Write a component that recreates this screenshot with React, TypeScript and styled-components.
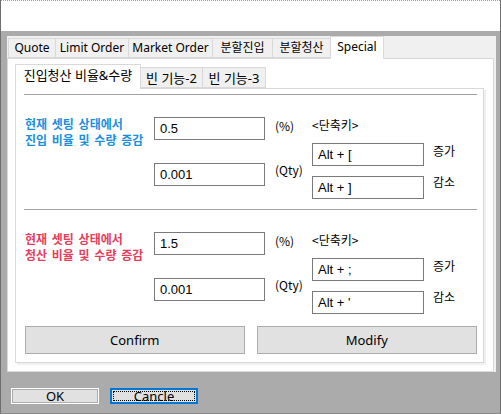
import React from "react";
import styled, { createGlobalStyle } from "styled-components";

const GlobalStyle = createGlobalStyle`
  html, body {
    margin: 0;
    padding: 0;
    background: #ffffff;
  }
  * {
    box-sizing: border-box;
  }
`;

const UI_FONT = `"Noto Sans", "Noto Sans CJK KR", sans-serif`;
const KR_FONT = `"Noto Sans CJK KR", "Noto Sans", sans-serif`;

const Window = styled.div`
  width: 501px;
  height: 414px;
  display: flex;
  flex-direction: column;
  border-left: 1px solid #6e6e6e;
  border-right: 1px solid #6e6e6e;
  border-bottom: 1px solid #8a8a8a;
  font-family: ${UI_FONT};
  color: #000;
  overflow: hidden;
`;

const TopBand = styled.div`
  height: 31px;
  flex: none;
  background: #ffffff;
  border-top: 1px dotted #9a9a9a;
`;

const Client = styled.div`
  flex: 1;
  background: #ababab;
  padding: 5px 4px 0 6px;
  display: flex;
  flex-direction: column;
`;

const TabControl = styled.div`
  width: 489px;
  height: 336px;
  background: #f0f0f0;
  display: flex;
  flex-direction: column;
  padding: 0 2px 1px 0;
`;

const TabStrip = styled.div<{ $h: number; $pad: number }>`
  height: ${(p) => p.$h}px;
  flex: none;
  display: flex;
  align-items: flex-end;
  padding-left: ${(p) => p.$pad}px;
`;

const Tab = styled.div<{ $w: number; $active?: boolean; $h: number; $size: number }>`
  width: ${(p) => p.$w}px;
  height: ${(p) => p.$h}px;
  margin-left: -1px;
  &:first-child {
    margin-left: 0;
  }
  border: 1px solid #d9d9d9;
  border-bottom: ${(p) => (p.$active ? "none" : "1px solid #d9d9d9")};
  background: ${(p) => (p.$active ? "#ffffff" : "#f0f0f0")};
  margin-bottom: ${(p) => (p.$active ? "-1px" : "0")};
  position: relative;
  z-index: ${(p) => (p.$active ? 2 : 1)};
  display: flex;
  align-items: ${(p) => (p.$active ? "flex-start" : "center")};
  padding-top: ${(p) => (p.$active ? "2px" : "0")};
  justify-content: center;
  font-size: ${(p) => p.$size}px;
  line-height: 16px;
  white-space: nowrap;
`;

const Page = styled.div`
  flex: 1;
  background: #ffffff;
  border: 1px solid #d9d9d9;
  padding: 5px 6px 6px 7px;
  display: flex;
`;

const InnerControl = styled.div`
  width: 472px;
  height: 301px;
  display: flex;
  flex-direction: column;
`;

const InnerPage = styled.div`
  width: 469px;
  height: 275px;
  background: #ffffff;
  border: 1px solid #d9d9d9;
  box-shadow: 2px 2px 0 #f0f0f0;
  padding: 5px 6px 0 8px;
  display: flex;
  flex-direction: column;
`;

const Section = styled.div<{ $h: number }>`
  height: ${(p) => p.$h}px;
  flex: none;
  border-top: 1px solid #a0a0a0;
  display: flex;
`;

const Label = styled.div<{ $color: string }>`
  width: 130px;
  padding: 21px 0 0 1px;
  font-family: ${KR_FONT};
  font-weight: 600;
  font-size: 12px;
  line-height: 16px;
  word-spacing: 2px;
  color: ${(p) => p.$color};
  white-space: nowrap;
`;

const Column = styled.div<{ $w: number; $top: number; $gap: number; $ml?: number }>`
  width: ${(p) => p.$w}px;
  margin-left: ${(p) => p.$ml ?? 0}px;
  padding-top: ${(p) => p.$top}px;
  display: flex;
  flex-direction: column;
  gap: ${(p) => p.$gap}px;
`;

const Field = styled.div`
  height: 23px;
  border: 1px solid #7a7a7a;
  background: #fff;
  padding-left: 5px;
  display: flex;
  align-items: center;
  font-size: 13px;
  font-family: "Liberation Sans", ${UI_FONT};
  white-space: nowrap;
`;

const Caption = styled.div`
  height: 16px;
  line-height: 16px;
  font-size: 12px;
  font-family: ${KR_FONT};
  white-space: nowrap;
`;

const ButtonRow = styled.div`
  margin-top: 2px;
  padding-left: 1px;
  display: flex;
  gap: 12px;
`;

const PushButton = styled.div<{ $w: number }>`
  width: ${(p) => p.$w}px;
  height: 28px;
  background: #e1e1e1;
  border: 1px solid #adadad;
  display: flex;
  align-items: center;
  justify-content: center;
  font-size: 13px;
`;

const DialogButtons = styled.div`
  margin-top: 16px;
  padding-left: 4px;
  display: flex;
  gap: 11px;
`;

const DialogButton = styled.div<{ $focused?: boolean }>`
  width: 88px;
  height: 16px;
  background: #e1e1e1;
  border: ${(p) => (p.$focused ? "2px solid #0078d7" : "1px solid #ffffff")};
  box-shadow: ${(p) => (p.$focused ? "none" : "inset 0 0 0 1px #adadad")};
  padding: ${(p) => (p.$focused ? "1px" : "0")};
  display: flex;
  font-size: 13px;
  line-height: 12px;
`;

const FocusRect = styled.div<{ $show?: boolean }>`
  flex: 1;
  border: ${(p) => (p.$show ? "1px dotted #000" : "none")};
  display: flex;
  align-items: center;
  justify-content: center;
  overflow: visible;
`;

const topTabs = [
  { label: "Quote", w: 48 },
  { label: "Limit Order", w: 74 },
  { label: "Market Order", w: 85 },
  { label: "분할진입", w: 61 },
  { label: "분할청산", w: 59 },
  { label: "Special", w: 54, active: true },
];

const subTabs = [
  { label: "진입청산 비율&수량", w: 126, active: true },
  { label: "빈 기능-2", w: 63 },
  { label: "빈 기능-3", w: 64 },
];

type GroupProps = {
  color: string;
  lines: [string, string];
  ratio: string;
  qty: string;
  up: string;
  down: string;
  h: number;
};

function Group({ color, lines, ratio, qty, up, down, h }: GroupProps) {
  return (
    <Section $h={h}>
      <Label $color={color}>
        {lines[0]}
        <br />
        {lines[1]}
      </Label>
      <Column $w={111} $top={22} $gap={23}>
        <Field>{ratio}</Field>
        <Field>{qty}</Field>
      </Column>
      <Column $w={37} $ml={10} $top={23} $gap={28}>
        <Caption>(%)</Caption>
        <Caption>(Qty)</Caption>
      </Column>
      <Column $w={112} $top={22} $gap={10}>
        <Caption>&lt;단축키&gt;</Caption>
        <Field>{up}</Field>
        <Field>{down}</Field>
      </Column>
      <Column $w={40} $ml={9} $top={48} $gap={15}>
        <Caption>증가</Caption>
        <Caption>감소</Caption>
      </Column>
    </Section>
  );
}

export default function App() {
  return (
    <>
      <GlobalStyle />
      <Window>
        <TopBand />
        <Client>
          <TabControl>
            <TabStrip $h={22} $pad={1}>
              {topTabs.map((t) => (
                <Tab key={t.label} $w={t.w} $h={t.active ? 23 : 20} $size={12} $active={t.active}>
                  {t.label}
                </Tab>
              ))}
            </TabStrip>
            <Page>
              <InnerControl>
                <TabStrip $h={24} $pad={0}>
                  {subTabs.map((t) => (
                    <Tab key={t.label} $w={t.w} $h={t.active ? 25 : 21} $size={13} $active={t.active}>
                      {t.label}
                    </Tab>
                  ))}
                </TabStrip>
                <InnerPage>
                  <Group
                    h={115}
                    color="#1a8fe0"
                    lines={["현재 셋팅 상태에서", "진입 비율 및 수량 증감"]}
                    ratio="0.5"
                    qty="0.001"
                    up="Alt + ["
                    down="Alt + ]"
                  />
                  <Group
                    h={115}
                    color="#e63d5c"
                    lines={["현재 셋팅 상태에서", "청산 비율 및 수량 증감"]}
                    ratio="1.5"
                    qty="0.001"
                    up="Alt + ;"
                    down="Alt + '"
                  />
                  <ButtonRow>
                    <PushButton $w={220}>Confirm</PushButton>
                    <PushButton $w={221}>Modify</PushButton>
                  </ButtonRow>
                </InnerPage>
              </InnerControl>
            </Page>
          </TabControl>
          <DialogButtons>
            <DialogButton>
              <FocusRect>OK</FocusRect>
            </DialogButton>
            <DialogButton $focused>
              <FocusRect $show>Cancle</FocusRect>
            </DialogButton>
          </DialogButtons>
        </Client>
      </Window>
    </>
  );
}
